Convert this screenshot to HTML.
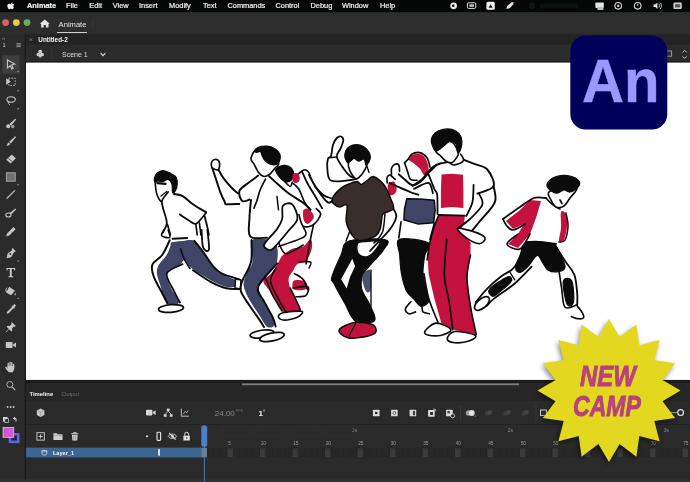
<!DOCTYPE html>
<html><head><meta charset="utf-8"><title>Animate</title>
<style>html,body{margin:0;padding:0;background:#2b2b2b;overflow:hidden}svg{display:block}</style></head>
<body><svg width="690" height="482" viewBox="0 0 690 482">
<g filter="url(#soft0)"><rect x="0" y="0" width="690" height="482" fill="#2b2b2b"/><rect x="0" y="0" width="690" height="12.3" fill="#050706"/><rect x="0" y="12.3" width="690" height="22" fill="#2d2d2d"/><rect x="25" y="34.3" width="665" height="10.5" fill="#232323"/><rect x="25" y="44.8" width="665" height="17.5" fill="#2b2b2b"/><rect x="25" y="61" width="665" height="1.8" fill="#1a1a1a"/><rect x="25.7" y="62.6" width="664.3" height="317.3" fill="#ffffff"/><rect x="0" y="34.3" width="25" height="448" fill="#2b2b2b"/><rect x="24.6" y="34.3" width="1.4" height="448" fill="#1c1c1c"/><rect x="26" y="380.2" width="664" height="102" fill="#2a2a2a"/><rect x="26" y="380.2" width="664" height="3" fill="#1b1b1b"/><rect x="26" y="383.2" width="664" height="17.5" fill="#262626"/><rect x="242" y="383.4" width="277" height="1.8" fill="#7d7d7d"/><rect x="26" y="424" width="664" height="1" fill="#222"/><rect x="26" y="447.6" width="177" height="9.8" fill="#3b6491"/><rect x="0" y="479.5" width="690" height="2.5" fill="#323232"/><text x="27" y="8.1" font-family="Liberation Sans, sans-serif" font-size="7.4" fill="#f2f2f2" font-weight="bold" text-anchor="start" stroke="#f2f2f2" stroke-width=".2">Animate</text><text x="66" y="8.1" font-family="Liberation Sans, sans-serif" font-size="7.4" fill="#f2f2f2" font-weight="normal" text-anchor="start" stroke="#f2f2f2" stroke-width=".2">File</text><text x="89.3" y="8.1" font-family="Liberation Sans, sans-serif" font-size="7.4" fill="#f2f2f2" font-weight="normal" text-anchor="start" stroke="#f2f2f2" stroke-width=".2">Edit</text><text x="112.7" y="8.1" font-family="Liberation Sans, sans-serif" font-size="7.4" fill="#f2f2f2" font-weight="normal" text-anchor="start" stroke="#f2f2f2" stroke-width=".2">View</text><text x="139" y="8.1" font-family="Liberation Sans, sans-serif" font-size="7.4" fill="#f2f2f2" font-weight="normal" text-anchor="start" stroke="#f2f2f2" stroke-width=".2">Insert</text><text x="169" y="8.1" font-family="Liberation Sans, sans-serif" font-size="7.4" fill="#f2f2f2" font-weight="normal" text-anchor="start" stroke="#f2f2f2" stroke-width=".2">Modify</text><text x="203" y="8.1" font-family="Liberation Sans, sans-serif" font-size="7.4" fill="#f2f2f2" font-weight="normal" text-anchor="start" stroke="#f2f2f2" stroke-width=".2">Text</text><text x="227.5" y="8.1" font-family="Liberation Sans, sans-serif" font-size="7.4" fill="#f2f2f2" font-weight="normal" text-anchor="start" stroke="#f2f2f2" stroke-width=".2">Commands</text><text x="275.5" y="8.1" font-family="Liberation Sans, sans-serif" font-size="7.4" fill="#f2f2f2" font-weight="normal" text-anchor="start" stroke="#f2f2f2" stroke-width=".2">Control</text><text x="310.5" y="8.1" font-family="Liberation Sans, sans-serif" font-size="7.4" fill="#f2f2f2" font-weight="normal" text-anchor="start" stroke="#f2f2f2" stroke-width=".2">Debug</text><text x="342" y="8.1" font-family="Liberation Sans, sans-serif" font-size="7.4" fill="#f2f2f2" font-weight="normal" text-anchor="start" stroke="#f2f2f2" stroke-width=".2">Window</text><text x="380" y="8.1" font-family="Liberation Sans, sans-serif" font-size="7.4" fill="#f2f2f2" font-weight="normal" text-anchor="start" stroke="#f2f2f2" stroke-width=".2">Help</text><path d="M12.6 2.6c-.9.1-1.5.8-1.5 1.5 .8.1 1.6-.7 1.5-1.5z M13.9 7.3c-.4.9-.9 1.9-1.7 1.9-.6 0-.8-.4-1.5-.4s-.9.4-1.5.4c-.8 0-1.9-1.8-1.9-3.200 0-1.500 1-2.200 1.900-2.200.7 0 1.100.4 1.600.4.500 0 .9-.4 1.700-.4.500 0 1.200.2 1.700.9-1.300.8-1.100 2.300-.3 2.600z" fill="#f2f2f2"/><circle cx="453.6" cy="5.8" r="3.4" fill="#e8e8e8"/><circle cx="453.2" cy="5.8" r="1.3" fill="#111"/><rect x="467.4" y="2.8" width="8.4" height="5.6" rx="1.2" fill="none" stroke="#dcdcdc" stroke-width="1"/><rect x="469.3" y="4.3" width="4.6" height="2.6" fill="#bbb"/><rect x="486.4" y="1.8" width="8.4" height="8" rx="1.6" fill="#f0f0f0"/><path d="M488.6 7.8l2-3.6 2 3.6z" fill="#111"/><path d="M506.2 9l1.200-3.200 3.800-3.400 2.400-.4-.4 2.400-3.400 3.800z" fill="#e0e0e0"/><rect x="529" y="2.600" width="6" height="6.600" rx="2" fill="#0e1612"/><rect x="540" y="3.600" width="38" height="4.600" fill="#0b120e"/><rect x="595.4" y="2.400" width="8.400" height="5.600" rx=".8" fill="#e6e6e6"/><rect x="597.4" y="7" width="6" height="3" fill="#bdbdbd"/><circle cx="618.2" cy="5.800" r="3.300" fill="none" stroke="#d8d8d8" stroke-width="1.100"/><circle cx="618.2" cy="5.800" r="1.200" fill="#d8d8d8"/><circle cx="637.7" cy="5.800" r="3.300" fill="none" stroke="#d8d8d8" stroke-width="1.100"/><path d="M637.7 3.800v2.400" stroke="#d8d8d8" stroke-width="1"/><path d="M653.6 4.600h1.600l2.200-2v6.400l-2.200-2h-1.600z" fill="#e6e6e6"/><path d="M658.8 3.800a3 3 0 0 1 0 4M660.2 2.600a4.600 4.600 0 0 1 0 6.400" stroke="#e0e0e0" stroke-width=".8" fill="none"/><rect x="673.4" y="2.600" width="8.400" height="6.400" rx="1.200" fill="#cfcfcf"/><rect x="675" y="4.200" width="5.200" height="3.200" fill="#555"/><circle cx="5.600" cy="22.600" r="3.400" fill="#d9606a"/><circle cx="16.300" cy="22.600" r="3.400" fill="#e3cf45"/><circle cx="27" cy="22.600" r="3.400" fill="#62b257"/><path d="M44.800 19.400l-5 4.400h1.300v3.800h2.600v-2.600h2.200v2.600h2.600v-3.800h1.300z" fill="#e4e4e4"/><text x="58.6" y="27.2" font-family="Liberation Sans, sans-serif" font-size="7.6" fill="#e6e6e6" font-weight="normal" text-anchor="start" >Animate</text><rect x="57" y="32" width="30" height="1" fill="#cfcfcf"/><rect x="92.500" y="18" width=".7" height="11" fill="#3c3c3c"/><path d="M29.600 38.300l2.600 2.600M32.200 38.300l-2.600 2.600" stroke="#8a8a8a" stroke-width=".7"/><text x="38.3" y="41.9" font-family="Liberation Sans, sans-serif" font-size="6.4" fill="#f0f0f0" font-weight="bold" text-anchor="start" >Untitled-2</text><g fill="#d0d0d0"><circle cx="40.200" cy="51.600" r="1.900"/><circle cx="38.400" cy="54.600" r="1.900"/><circle cx="42" cy="54.600" r="1.900"/><path d="M39.600 54h1.200l.6 3.400h-2.400z"/></g><rect x="51.400" y="48" width=".7" height="11" fill="#3a3a3a"/><text x="62" y="56.9" font-family="Liberation Sans, sans-serif" font-size="7" fill="#dedede" font-weight="normal" text-anchor="start" >Scene 1</text><path d="M100.600 53.200l2.400 2.400 2.400-2.400" stroke="#dedede" stroke-width="1.200" fill="none"/><rect x="666.200" y="51" width="5.400" height="5.200" fill="none" stroke="#9a9a9a" stroke-width="1"/><path d="M682.600 52.400l2-2 2 2M682.600 56.400l2 2 2-2" stroke="#c8c8c8" stroke-width="1" fill="none"/><text x="2" y="39.5" font-family="Liberation Sans, sans-serif" font-size="5" fill="#9a9a9a" font-weight="normal" text-anchor="start" >‹‹</text><text x="2.5" y="47" font-family="Liberation Sans, sans-serif" font-size="5.5" fill="#cfcfcf" font-weight="normal" text-anchor="start" >1</text><path d="M16.400 43.600h4.400M16.400 45.100h4.400M16.400 46.600h4.400" stroke="#a8a8a8" stroke-width=".8"/><rect x="2.300" y="55.300" width="17.400" height="18.400" fill="#3e3e3e"/><g transform="translate(10.8,64.5)" fill="#c6c6c6" stroke="none"><path d="M-3.400 -4.600l7.400 4.200-3.200 1 1.600 3.200-1.400.7-1.600-3.200-2.800 2.100z" fill="none" stroke="#c6c6c6" stroke-width="1.100"/></g><g transform="translate(10.8,82)" fill="#c6c6c6" stroke="none"><path d="M-4.600 -3.800l4.600 3.400-4.600 3.400z"/><rect x="-2" y="-3.800" width="6.400" height="7.200" fill="none" stroke="#c6c6c6" stroke-width=".9" stroke-dasharray="1.600 1.200"/></g><g transform="translate(10.8,100.5)" fill="#c6c6c6" stroke="none"><ellipse cx=".3" cy="-1" rx="4.200" ry="2.800" fill="none" stroke="#c6c6c6" stroke-width="1.100"/><path d="M-2.200 1.200c-.8 1.400 0 2.600 1.200 3" fill="none" stroke="#c6c6c6" stroke-width="1"/></g><g transform="translate(10.8,123.5)" fill="#c6c6c6" stroke="none"><path d="M4.400 -4.800l.9.900-5 6.100-1.700-1.700z"/><circle cx="-2.600" cy="2.800" r="2"/><circle cx="2" cy="3" r="1.700" fill="#9a9a9a"/></g><g transform="translate(10.8,141)" fill="#c6c6c6" stroke="none"><path d="M4.400 -4.800l.9.900-5.200 6.300-1.700-1.700z"/><path d="M-2.200 1.400l1.600 1.600c-1 1.700-2.600 1.800-4 1.600 1.300-.7 1-2.300 2.400-3.200z"/></g><g transform="translate(10.8,159)" fill="#c6c6c6" stroke="none"><path d="M1 -4.400l4 3.600-5 5.200-4.600-3.600z"/><path d="M-2.400 -.6l4 3.400" stroke="#2b2b2b" stroke-width=".8"/></g><g transform="translate(10.8,177)" fill="#c6c6c6" stroke="none"><rect x="-4.400" y="-4.200" width="8.800" height="8.400" fill="#707070" stroke="#a6a6a6" stroke-width="1"/></g><g transform="translate(10.8,194.5)" fill="#c6c6c6" stroke="none"><path d="M-4.200 4.200l8.400-8.400" stroke="#c6c6c6" stroke-width="1.200"/></g><g transform="translate(10.8,213)" fill="#c6c6c6" stroke="none"><path d="M4.600 -4.600l.9.900-5 5-1.700-1.300z"/><ellipse cx="-2.400" cy="2" rx="2.600" ry="2" fill="none" stroke="#c6c6c6" stroke-width="1.100"/></g><g transform="translate(10.8,232)" fill="#c6c6c6" stroke="none"><path d="M2.600 -5l2.200 2.200-6.400 6.400-3 .9.900-3z"/></g><g transform="translate(10.8,253)" fill="#c6c6c6" stroke="none"><path d="M1.600 -5.200l3.400 3.400-2 1.200-2.600 4.800-4.600 1 1-4.600 4.200-3z"/><circle cx="-.6" cy="1" r=".9" fill="#2b2b2b"/></g><g transform="translate(10.8,272.5)" fill="#c6c6c6" stroke="none"><path d="M-4.400 -4.600h8.800v2.400h-1l-.4-1.200h-2v7l1.400.4v.7h-4.800v-.7l1.400-.4v-7h-2l-.4 1.200h-1z"/></g><g transform="translate(10.8,291)" fill="#c6c6c6" stroke="none"><path d="M-1.600 -4.200l5.800 4-4 4.400-4.800-2.800z"/><path d="M-3.600 -3.200c-1.600.8-1.600 3-.6 4.600" stroke="#c6c6c6" stroke-width="1" fill="none"/><path d="M4.400 1.800c.8 1.200.8 2.200 0 2.800-.8-.6-.8-1.600 0-2.800z"/></g><g transform="translate(10.8,309)" fill="#c6c6c6" stroke="none"><path d="M3.400 -5.200l1.800 1.800-1.600 1.800.5.500-.9.900-.5-.5-4.900 4.900-2 .6.600-2 4.900-4.900-.5-.5.900-.9.500.5z"/></g><g transform="translate(10.8,327)" fill="#c6c6c6" stroke="none"><path d="M1 -5l4 4-1 .8-.8-.3-2 2 .3 2-1 1-2.200-2.200-2.700 2.900-.5-.5 2.900-2.700-2.200-2.200 1-1 2 .3 2-2-.3-.8z"/></g><g transform="translate(10.8,345)" fill="#c6c6c6" stroke="none"><rect x="-5" y="-3" width="6.800" height="6" rx=".8"/><path d="M2.200 -.6l3-2v5.200l-3-2z"/></g><g transform="translate(10.8,367.5)" fill="#c6c6c6" stroke="none"><path d="M-2.600 -1v-3M-.8 -1.400v-3.600M1 -1.400v-3.400M2.800 -.6v-2.600" stroke="#c6c6c6" stroke-width="1.300" stroke-linecap="round" fill="none"/><path d="M-3.300 -1.400h6.800v2.600l-1.400 3.600h-4l-2.600-2.800-1.200-2.400 1-.5 1.400 1.300z"/></g><g transform="translate(10.8,385.7)" fill="#c6c6c6" stroke="none"><circle cx="-1" cy="-1.200" r="3" fill="none" stroke="#b0b0b0" stroke-width="1"/><path d="M1.400 1.200l3 3.200" stroke="#b0b0b0" stroke-width="1.300"/></g><path d="M17 72.0h1.600v-1.600z" fill="#bdbdbd"/><path d="M17 91.19999999999999h1.600v-1.600z" fill="#bdbdbd"/><path d="M17 109.19999999999999h1.600v-1.600z" fill="#bdbdbd"/><path d="M17 185.2h1.600v-1.600z" fill="#bdbdbd"/><path d="M17 261.6h1.600v-1.600z" fill="#bdbdbd"/><path d="M17 299.1h1.600v-1.600z" fill="#bdbdbd"/><circle cx="7.600" cy="407" r=".9" fill="#cfcfcf"/><circle cx="10.600" cy="407" r=".9" fill="#cfcfcf"/><circle cx="13.600" cy="407" r=".9" fill="#cfcfcf"/><rect x="3" y="417" width="4.600" height="4.600" fill="#d8d8d8"/><rect x="4.800" y="418.800" width="3.600" height="3.600" fill="#2b2b2b" stroke="#d8d8d8" stroke-width=".7"/><path d="M13.400 418.400h2.600v3.200M13.400 418.400l1.400-1.300M13.400 418.400l1.400 1.300" stroke="#d8d8d8" stroke-width="1" fill="none"/><rect x="8.700" y="433" width="10.800" height="10.200" fill="#5b66da"/><rect x="11.400" y="435.600" width="5.400" height="5" fill="#1f2340"/><rect x="3" y="427.400" width="10.800" height="10" fill="#d556d3" stroke="#e9e9e9" stroke-width=".6"/><text x="29.4" y="396.3" font-family="Liberation Sans, sans-serif" font-size="5.9" fill="#f0f0f0" font-weight="bold" text-anchor="start" >Timeline</text><text x="61.6" y="396.3" font-family="Liberation Sans, sans-serif" font-size="5.9" fill="#6a6a6a" font-weight="normal" text-anchor="start" >Output</text><path d="M40.600 408.600l3.800 1.800v4.600l-3.800 2-3.800-2v-4.600z" fill="#c9c9c9"/><path d="M36.800 410.400l3.800 1.800 3.800-1.800M40.600 412.200v4.800" stroke="#8b8b8b" stroke-width=".6" fill="none"/><g transform="translate(150.800,412.600)" fill="#d6d6d6"><rect x="-4.800" y="-2.800" width="6.400" height="5.600" rx=".8"/><path d="M2 -.6l2.800-1.800v4.800l-2.800-1.800z"/></g><g transform="translate(168.200,412.600)" fill="#d6d6d6"><rect x="-1.400" y="-4" width="2.800" height="2.600"/><rect x="-4.400" y="1.600" width="2.800" height="2.600"/><rect x="1.600" y="1.600" width="2.800" height="2.600"/><path d="M0 -1.400l-3 3M0 -1.400l3 3" stroke="#d6d6d6" stroke-width=".8"/></g><g transform="translate(184.900,412.600)" fill="none" stroke="#cfcfcf" stroke-width=".9"><path d="M-3.600 -4v7.600h7.600"/><path d="M-1.600 1.600l2-3 1.400 1.600 1.600-2.400" stroke-width=".7"/></g><text x="214.8" y="416" font-family="Liberation Sans, sans-serif" font-size="8" fill="#8a8a8a" font-weight="normal" text-anchor="start" >24.00</text><text x="236.2" y="411.6" font-family="Liberation Sans, sans-serif" font-size="3.4" fill="#777" font-weight="normal" text-anchor="start" >FPS</text><text x="258.5" y="416.2" font-family="Liberation Sans, sans-serif" font-size="8" fill="#f4f4f4" font-weight="bold" text-anchor="start" >1</text><path d="M264 409.400v2.400" stroke="#ddd" stroke-width=".8"/><rect x="372.9" y="409.7" width="6.600" height="6.600" rx=".6" fill="#dcdcdc"/><circle cx="376.200" cy="413" r="1.300" fill="#222"/><rect x="391.09999999999997" y="409.7" width="6.600" height="6.600" rx=".6" fill="#dcdcdc"/><circle cx="394.400" cy="413" r="1.500" fill="none" stroke="#333" stroke-width=".7"/><rect x="409.59999999999997" y="409.7" width="6.600" height="6.600" rx=".6" fill="#dcdcdc"/><rect x="412.900" y="410.800" width="2.200" height="4.400" fill="#444"/><rect x="428.09999999999997" y="410.09999999999997" width="6.600" height="6.600" rx=".6" fill="#dcdcdc"/><rect x="430" y="412" width="3" height="3" fill="#333"/><path d="M433.400 409.200l2 .2-.2 2" stroke="#dcdcdc" stroke-width=".8" fill="none"/><rect x="446.09999999999997" y="409.7" width="6.600" height="6.600" rx=".6" fill="#dcdcdc"/><rect x="447.400" y="411" width="2.400" height="2.400" fill="#444"/><circle cx="452.600" cy="415.800" r="2" fill="#2a2a2a" stroke="#dcdcdc" stroke-width=".8"/><rect x="460.200" y="405" width=".8" height="17" fill="#3a3a3a"/><circle cx="468.600" cy="413" r="2.800" fill="#9c9c9c"/><circle cx="471.800" cy="413" r="2.900" fill="#e2e2e2"/><path d="M474.600 416.600h1.300v-1.300z" fill="#bbb"/><circle cx="487.0" cy="413.6" r="2.400" fill="#3d3d3d"/><circle cx="489.79999999999995" cy="412.4" r="2.400" fill="#444"/><circle cx="505.6" cy="413.6" r="2.400" fill="#3d3d3d"/><circle cx="508.4" cy="412.4" r="2.400" fill="#444"/><circle cx="523.6" cy="413.6" r="2.400" fill="#3d3d3d"/><circle cx="526.4" cy="412.4" r="2.400" fill="#444"/><rect x="535.600" y="405" width=".8" height="17" fill="#3a3a3a"/><rect x="540.500" y="410" width="6" height="5.400" fill="none" stroke="#cfcfcf" stroke-width="1"/><path d="M662 412.600h15" stroke="#9a9a9a" stroke-width="1"/><circle cx="680.600" cy="412.600" r="2.900" fill="#2a2a2a" stroke="#e0e0e0" stroke-width="1.200"/><rect x="36.900" y="432.700" width="7.400" height="7.400" fill="none" stroke="#d6d6d6" stroke-width=".9"/><path d="M38.600 436.400h4M40.600 434.400v4" stroke="#d6d6d6" stroke-width=".9"/><path d="M53.400 433.200h3.200l.9 1.100h5v5.800h-9.100z" fill="#cfcfcf"/><path d="M53.400 435.600h9.100" stroke="#777" stroke-width=".5"/><path d="M71.200 433.700h7.200M73.400 433.700v-1.100h2.800v1.100" stroke="#cfcfcf" stroke-width=".9" fill="none"/><path d="M71.900 434.800h5.800l-.5 5.600h-4.800z" fill="#cfcfcf"/><path d="M73.800 435.600v4M75.800 435.600v4" stroke="#666" stroke-width=".5"/><circle cx="147" cy="436.300" r="1" fill="#eee"/><rect x="157" y="432.200" width="3.600" height="8.200" rx=".8" fill="none" stroke="#e6e6e6" stroke-width="1.100"/><g transform="translate(172.400,436.300)" stroke="#d8d8d8" fill="none" stroke-width=".9"><path d="M-4.200 0c2-3 6.400-3 8.400 0-2 3-6.400 3-8.400 0z"/><circle r="1.100" fill="#d8d8d8"/><path d="M-3.400 -3.400l6.800 6.800" stroke-width="1.100"/></g><g transform="translate(186.600,436.300)"><rect x="-3.200" y="-.6" width="6.400" height="4.800" fill="#e2e2e2"/><path d="M-1.900 -.6v-1.500a1.900 1.900 0 0 1 3.800 0v1.500" stroke="#e2e2e2" fill="none" stroke-width="1"/><circle cy="1.700" r=".8" fill="#333"/></g><path d="M42 450.400h4.800v3c0 1-.9 1.700-2.400 1.700s-2.400-.7-2.400-1.700z" fill="none" stroke="#d9e2ee" stroke-width=".8"/><path d="M42 451.800h4.800" stroke="#d9e2ee" stroke-width=".6"/><text x="52.9" y="454.6" font-family="Liberation Sans, sans-serif" font-size="5.6" fill="#f2f5fa" font-weight="bold" text-anchor="start" >Layer_1</text><rect x="158" y="449.200" width="2" height="6.400" fill="#cfe0f4"/><rect x="203" y="447.600" width="487" height="9.800" fill="#272727"/><rect x="207.0" y="448.400" width=".5" height="8.600" fill="#222"/><rect x="213.5" y="448.400" width=".5" height="8.600" fill="#222"/><rect x="220.0" y="448.400" width=".5" height="8.600" fill="#222"/><rect x="226.5" y="448.400" width=".5" height="8.600" fill="#222"/><rect x="227.5" y="448.400" width="5.400" height="8.600" fill="#3a3a3a"/><rect x="239.5" y="448.400" width=".5" height="8.600" fill="#222"/><rect x="246.0" y="448.400" width=".5" height="8.600" fill="#222"/><rect x="252.5" y="448.400" width=".5" height="8.600" fill="#222"/><rect x="259.0" y="448.400" width=".5" height="8.600" fill="#222"/><rect x="260.0" y="448.400" width="5.400" height="8.600" fill="#3a3a3a"/><rect x="272.0" y="448.400" width=".5" height="8.600" fill="#222"/><rect x="278.5" y="448.400" width=".5" height="8.600" fill="#222"/><rect x="285.0" y="448.400" width=".5" height="8.600" fill="#222"/><rect x="291.5" y="448.400" width=".5" height="8.600" fill="#222"/><rect x="292.5" y="448.400" width="5.400" height="8.600" fill="#3a3a3a"/><rect x="304.5" y="448.400" width=".5" height="8.600" fill="#222"/><rect x="311.0" y="448.400" width=".5" height="8.600" fill="#222"/><rect x="317.5" y="448.400" width=".5" height="8.600" fill="#222"/><rect x="324.0" y="448.400" width=".5" height="8.600" fill="#222"/><rect x="325.0" y="448.400" width="5.400" height="8.600" fill="#3a3a3a"/><rect x="337.0" y="448.400" width=".5" height="8.600" fill="#222"/><rect x="343.5" y="448.400" width=".5" height="8.600" fill="#222"/><rect x="350.0" y="448.400" width=".5" height="8.600" fill="#222"/><rect x="356.5" y="448.400" width=".5" height="8.600" fill="#222"/><rect x="357.5" y="448.400" width="5.400" height="8.600" fill="#3a3a3a"/><rect x="369.5" y="448.400" width=".5" height="8.600" fill="#222"/><rect x="376.0" y="448.400" width=".5" height="8.600" fill="#222"/><rect x="382.5" y="448.400" width=".5" height="8.600" fill="#222"/><rect x="389.0" y="448.400" width=".5" height="8.600" fill="#222"/><rect x="390.0" y="448.400" width="5.400" height="8.600" fill="#3a3a3a"/><rect x="402.0" y="448.400" width=".5" height="8.600" fill="#222"/><rect x="408.5" y="448.400" width=".5" height="8.600" fill="#222"/><rect x="415.0" y="448.400" width=".5" height="8.600" fill="#222"/><rect x="421.5" y="448.400" width=".5" height="8.600" fill="#222"/><rect x="422.5" y="448.400" width="5.400" height="8.600" fill="#3a3a3a"/><rect x="434.5" y="448.400" width=".5" height="8.600" fill="#222"/><rect x="441.0" y="448.400" width=".5" height="8.600" fill="#222"/><rect x="447.5" y="448.400" width=".5" height="8.600" fill="#222"/><rect x="454.0" y="448.400" width=".5" height="8.600" fill="#222"/><rect x="455.0" y="448.400" width="5.400" height="8.600" fill="#3a3a3a"/><rect x="467.0" y="448.400" width=".5" height="8.600" fill="#222"/><rect x="473.5" y="448.400" width=".5" height="8.600" fill="#222"/><rect x="480.0" y="448.400" width=".5" height="8.600" fill="#222"/><rect x="486.5" y="448.400" width=".5" height="8.600" fill="#222"/><rect x="487.5" y="448.400" width="5.400" height="8.600" fill="#3a3a3a"/><rect x="499.5" y="448.400" width=".5" height="8.600" fill="#222"/><rect x="506.0" y="448.400" width=".5" height="8.600" fill="#222"/><rect x="512.5" y="448.400" width=".5" height="8.600" fill="#222"/><rect x="519.0" y="448.400" width=".5" height="8.600" fill="#222"/><rect x="520.0" y="448.400" width="5.400" height="8.600" fill="#3a3a3a"/><rect x="532.0" y="448.400" width=".5" height="8.600" fill="#222"/><rect x="538.5" y="448.400" width=".5" height="8.600" fill="#222"/><rect x="545.0" y="448.400" width=".5" height="8.600" fill="#222"/><rect x="551.5" y="448.400" width=".5" height="8.600" fill="#222"/><rect x="552.5" y="448.400" width="5.400" height="8.600" fill="#3a3a3a"/><rect x="564.5" y="448.400" width=".5" height="8.600" fill="#222"/><rect x="571.0" y="448.400" width=".5" height="8.600" fill="#222"/><rect x="577.5" y="448.400" width=".5" height="8.600" fill="#222"/><rect x="584.0" y="448.400" width=".5" height="8.600" fill="#222"/><rect x="585.0" y="448.400" width="5.400" height="8.600" fill="#3a3a3a"/><rect x="597.0" y="448.400" width=".5" height="8.600" fill="#222"/><rect x="603.5" y="448.400" width=".5" height="8.600" fill="#222"/><rect x="610.0" y="448.400" width=".5" height="8.600" fill="#222"/><rect x="616.5" y="448.400" width=".5" height="8.600" fill="#222"/><rect x="617.5" y="448.400" width="5.400" height="8.600" fill="#3a3a3a"/><rect x="629.5" y="448.400" width=".5" height="8.600" fill="#222"/><rect x="636.0" y="448.400" width=".5" height="8.600" fill="#222"/><rect x="642.5" y="448.400" width=".5" height="8.600" fill="#222"/><rect x="649.0" y="448.400" width=".5" height="8.600" fill="#222"/><rect x="650.0" y="448.400" width="5.400" height="8.600" fill="#3a3a3a"/><rect x="662.0" y="448.400" width=".5" height="8.600" fill="#222"/><rect x="668.5" y="448.400" width=".5" height="8.600" fill="#222"/><rect x="675.0" y="448.400" width=".5" height="8.600" fill="#222"/><rect x="681.5" y="448.400" width=".5" height="8.600" fill="#222"/><rect x="682.5" y="448.400" width="5.400" height="8.600" fill="#3a3a3a"/><rect x="694.5" y="448.400" width=".5" height="8.600" fill="#222"/><text x="228.2" y="444.6" font-family="Liberation Sans, sans-serif" font-size="4.8" fill="#9a9a9a" font-weight="normal" text-anchor="start" >5</text><text x="260.7" y="444.6" font-family="Liberation Sans, sans-serif" font-size="4.8" fill="#9a9a9a" font-weight="normal" text-anchor="start" >10</text><text x="293.2" y="444.6" font-family="Liberation Sans, sans-serif" font-size="4.8" fill="#9a9a9a" font-weight="normal" text-anchor="start" >15</text><text x="325.7" y="444.6" font-family="Liberation Sans, sans-serif" font-size="4.8" fill="#9a9a9a" font-weight="normal" text-anchor="start" >20</text><text x="358.2" y="444.6" font-family="Liberation Sans, sans-serif" font-size="4.8" fill="#9a9a9a" font-weight="normal" text-anchor="start" >25</text><text x="390.7" y="444.6" font-family="Liberation Sans, sans-serif" font-size="4.8" fill="#9a9a9a" font-weight="normal" text-anchor="start" >30</text><text x="423.2" y="444.6" font-family="Liberation Sans, sans-serif" font-size="4.8" fill="#9a9a9a" font-weight="normal" text-anchor="start" >35</text><text x="455.7" y="444.6" font-family="Liberation Sans, sans-serif" font-size="4.8" fill="#9a9a9a" font-weight="normal" text-anchor="start" >40</text><text x="488.2" y="444.6" font-family="Liberation Sans, sans-serif" font-size="4.8" fill="#9a9a9a" font-weight="normal" text-anchor="start" >45</text><text x="520.7" y="444.6" font-family="Liberation Sans, sans-serif" font-size="4.8" fill="#9a9a9a" font-weight="normal" text-anchor="start" >50</text><text x="553.2" y="444.6" font-family="Liberation Sans, sans-serif" font-size="4.8" fill="#9a9a9a" font-weight="normal" text-anchor="start" >55</text><text x="585.7" y="444.6" font-family="Liberation Sans, sans-serif" font-size="4.8" fill="#9a9a9a" font-weight="normal" text-anchor="start" >60</text><text x="618.2" y="444.6" font-family="Liberation Sans, sans-serif" font-size="4.8" fill="#9a9a9a" font-weight="normal" text-anchor="start" >65</text><text x="650.7" y="444.6" font-family="Liberation Sans, sans-serif" font-size="4.8" fill="#9a9a9a" font-weight="normal" text-anchor="start" >70</text><text x="683.2" y="444.6" font-family="Liberation Sans, sans-serif" font-size="4.8" fill="#9a9a9a" font-weight="normal" text-anchor="start" >75</text><text x="351.7" y="431.6" font-family="Liberation Sans, sans-serif" font-size="5" fill="#8a8a8a" font-weight="normal" text-anchor="start" >1s</text><text x="507.7" y="431.6" font-family="Liberation Sans, sans-serif" font-size="5" fill="#8a8a8a" font-weight="normal" text-anchor="start" >2s</text><text x="663.7" y="431.6" font-family="Liberation Sans, sans-serif" font-size="5" fill="#8a8a8a" font-weight="normal" text-anchor="start" >3s</text><rect x="222" y="426.600" width="30" height="9" fill="none" stroke="#333" stroke-width=".6"/><rect x="256" y="426.600" width="30" height="9" fill="none" stroke="#333" stroke-width=".6"/><rect x="290" y="426.600" width="30" height="9" fill="none" stroke="#333" stroke-width=".6"/><rect x="324" y="426.600" width="30" height="9" fill="none" stroke="#333" stroke-width=".6"/><rect x="203.900" y="425" width="1" height="57" fill="#4a79b8"/><rect x="201.200" y="425.400" width="6" height="21.400" rx="2" fill="#4c7fc6"/><rect x="201.400" y="447.800" width="5.600" height="9.400" fill="#6d7f96"/></g>
<g filter="url(#soft)"><g stroke-linejoin="round" stroke-linecap="round"><path d="M171.9 242.3 C173.9 241.5 179.2 241.2 182.7 240.9 C186.2 240.6 190.3 239.6 192.9 240.2 C195.5 240.8 196.3 242.6 198.0 244.5 C199.7 246.4 201.0 248.8 203.1 251.8 C205.2 254.8 207.7 259.3 210.3 262.7 C213.0 266.1 215.4 269.5 219.0 272.1 C222.6 274.8 229.1 277.2 232.1 278.6 C235.1 280.1 236.5 279.6 237.2 280.8 C237.9 282.0 238.2 284.9 236.4 285.9 C234.6 286.9 230.2 287.6 226.3 286.9 C222.4 286.2 217.5 283.8 213.2 281.6 C208.8 279.5 203.8 276.3 200.2 274.0 C196.6 271.7 194.1 270.2 191.4 268.0 C188.7 265.8 186.1 261.0 184.2 260.5 C182.3 260.0 182.5 262.9 179.8 264.8 C177.1 266.7 170.4 269.9 168.2 272.1 C166.0 274.3 166.1 274.8 166.8 277.9 C167.5 281.0 170.6 286.9 172.6 291.0 C174.6 295.1 179.3 300.2 179.0 302.5 C178.7 304.8 172.9 304.9 170.5 304.5 C168.1 304.1 166.3 303.0 164.6 299.8 C162.9 296.6 161.6 289.6 160.3 285.2 C159.0 280.8 157.2 276.9 156.9 273.5 C156.7 270.1 157.2 267.9 158.8 264.8 C160.5 261.7 164.9 257.8 166.8 254.7 C168.7 251.6 169.6 248.1 170.4 246.0 C171.2 243.9 169.9 243.2 171.9 242.3 Z" fill="#3f4567" stroke="none" stroke-width="0.00"/><path d="M169.7 240.2 C168.5 242.6 165.3 250.6 162.4 254.7 C159.5 258.8 153.8 261.2 152.3 264.8 C150.9 268.4 152.2 272.0 153.7 276.4 C155.1 280.8 158.7 286.5 161.0 291.0 C163.3 295.5 166.4 301.4 167.5 303.5" fill="none" stroke="#0b0b0b" stroke-width="1.95"/><path d="M182.7 264.1 C180.0 265.7 168.2 269.0 166.8 273.5 C165.4 278.0 171.8 286.2 174.0 291.0 C176.2 295.8 179.0 300.6 180.0 302.5" fill="none" stroke="#0b0b0b" stroke-width="1.80"/><path d="M180.6 248.9 C181.2 250.6 182.6 255.7 184.2 259.0 C185.8 262.3 189.0 266.9 190.0 268.5" fill="none" stroke="#0b0b0b" stroke-width="1.65"/><path d="M194.3 240.9 C195.8 242.7 199.9 247.6 203.1 251.8 C206.2 256.0 210.1 262.7 213.2 266.3 C216.3 269.9 217.6 271.3 221.9 273.5 C226.2 275.7 236.4 278.3 239.3 279.3" fill="none" stroke="#0b0b0b" stroke-width="1.95"/><path d="M192.9 270.2 C195.8 272.1 204.7 278.6 210.3 281.6 C215.9 284.6 221.5 287.1 226.3 288.3 C231.1 289.5 237.1 288.9 239.3 289.0" fill="none" stroke="#0b0b0b" stroke-width="1.95"/><path d="M172.6 238.7 L187.1 238.0" fill="none" stroke="#0b0b0b" stroke-width="1.95"/><path d="M235.5 279 L241 280 L240.5 289 L235 288 Z" fill="#fff" stroke="#0b0b0b" stroke-width="1.50"/><ellipse cx="171" cy="308.5" rx="12.5" ry="3.8" fill="#fff" stroke="#0b0b0b" stroke-width="1.72" transform="rotate(-4 171 308.5)"/><path d="M201.6 230.0 C201.8 232.9 201.9 244.1 203.1 247.4 C204.3 250.7 208.2 252.5 208.9 249.6 C209.6 246.7 207.7 233.3 207.4 230.0" fill="none" stroke="#0b0b0b" stroke-width="1.80"/><path d="M163.9 230.0 C163.5 231.0 160.7 234.6 161.7 235.8 C162.7 237.0 168.6 238.3 169.7 237.3 C170.8 236.3 168.4 231.2 168.2 230.0" fill="none" stroke="#0b0b0b" stroke-width="1.65"/><path d="M154.4 178.1 C154.8 176.5 155.9 174.3 157.3 173.0 C158.8 171.7 160.8 170.4 163.1 170.5 C165.4 170.6 168.9 172.6 171.1 173.7 C173.3 174.8 175.2 175.6 176.2 177.3 C177.2 179.0 177.3 181.7 177.2 183.9 C177.1 186.1 176.3 189.0 175.5 190.4 C174.7 191.8 173.2 193.7 172.6 192.6 C172.0 191.5 172.6 186.1 171.9 183.9 C171.2 181.7 169.8 179.9 168.2 179.5 C166.6 179.1 164.1 181.4 162.4 181.7 C160.7 181.9 159.3 180.9 158.1 181.0 C156.9 181.1 155.8 182.9 155.2 182.4 C154.6 181.9 154.1 179.7 154.4 178.1 Z" fill="#0b0b0b" stroke="#0b0b0b" stroke-width="1.20"/><path d="M155.2 182.4 C155.4 184.2 155.6 190.2 156.6 193.3 C157.6 196.5 159.9 200.5 161.0 201.3 C162.1 202.2 161.9 200.0 163.1 198.4 C164.3 196.8 167.3 193.0 168.2 191.9" fill="none" stroke="#0b0b0b" stroke-width="1.65"/><path d="M161.0 196.0 L166.8 191.5" fill="none" stroke="#0b0b0b" stroke-width="1.35"/><path d="M157.5 183.2 L165.5 183.8" fill="none" stroke="#0b0b0b" stroke-width="2.25"/><path d="M161.7 201.3 C161.9 202.5 162.2 204.9 163.1 208.5 C163.9 212.1 166.9 218.9 166.8 223.0 C166.7 227.1 163.1 231.5 162.4 233.2" fill="none" stroke="#0b0b0b" stroke-width="1.80"/><path d="M167.5 224.5 L170.4 234.7" fill="none" stroke="#0b0b0b" stroke-width="1.65"/><path d="M174.0 194.0 C175.4 194.4 179.5 194.5 182.7 196.2 C185.8 197.9 189.0 201.5 192.9 204.2 C196.8 206.9 203.8 210.9 206.0 212.2" fill="none" stroke="#0b0b0b" stroke-width="1.95"/><path d="M179.8 214.3 C181.2 215.3 185.8 218.6 188.5 220.2 C191.2 221.8 193.4 224.4 195.8 223.8 C198.2 223.2 201.4 218.3 203.1 216.5 C204.8 214.7 205.5 213.5 206.0 212.9" fill="none" stroke="#0b0b0b" stroke-width="1.80"/><path d="M195.8 223.8 L197.2 234.8" fill="none" stroke="#0b0b0b" stroke-width="1.65"/><path d="M199.4 223.0 L200.9 234.8" fill="none" stroke="#0b0b0b" stroke-width="1.65"/><path d="M204.5 215.8 C205.0 217.7 206.7 224.2 207.4 227.4 C208.1 230.6 208.7 233.6 208.9 234.8" fill="none" stroke="#0b0b0b" stroke-width="1.80"/><path d="M278.5 262.0 C280.4 258.9 280.6 257.2 283.0 255.0 C285.4 252.8 289.7 250.0 293.1 248.6 C296.5 247.2 300.3 248.0 303.2 246.4 C306.1 244.8 309.1 238.9 310.5 239.2 C311.9 239.4 312.6 244.3 311.9 247.9 C311.2 251.5 308.5 258.3 306.1 261.0 C303.7 263.7 299.6 262.4 297.4 264.0 C295.2 265.6 294.6 268.4 293.1 270.7 C291.7 273.0 289.2 275.1 288.7 278.0 C288.2 280.9 289.0 284.5 290.2 288.1 C291.4 291.7 294.3 296.1 296.0 299.7 C297.7 303.3 302.0 307.7 300.3 309.9 C298.6 312.1 289.4 313.5 285.8 312.8 C282.2 312.1 281.2 309.1 278.5 305.5 C275.8 301.9 272.3 295.1 269.8 291.0 C267.3 286.9 263.1 283.8 263.3 280.9 C263.6 278.0 268.8 276.8 271.3 273.6 C273.8 270.5 276.6 265.1 278.5 262.0 Z" fill="#c2123d" stroke="none" stroke-width="0.00"/><path d="M276.0 268.0 C275.1 270.2 270.0 275.7 270.5 281.0 C271.0 286.3 276.4 294.8 279.0 300.0 C281.6 305.2 284.8 310.0 286.0 312.0" fill="none" stroke="#0b0b0b" stroke-width="1.65"/><path d="M266.0 279.0 C267.0 281.5 269.3 288.7 272.0 294.0 C274.7 299.3 280.3 308.2 282.0 311.0" fill="none" stroke="#0b0b0b" stroke-width="1.65"/><path d="M300.3 309.9 C299.6 308.2 297.7 303.3 296.0 299.7 C294.3 296.1 291.2 290.0 290.2 288.1" fill="none" stroke="#0b0b0b" stroke-width="1.50"/><path d="M293.0 281.5 C293.8 279.9 296.8 279.9 299.0 280.0 C301.2 280.1 304.8 280.5 306.0 282.0 C307.2 283.5 308.5 287.7 306.5 289.0 C304.5 290.3 296.2 290.9 294.0 289.6 C291.8 288.4 292.2 283.1 293.0 281.5 Z" fill="#c2123d" stroke="none" stroke-width="0.00"/><path d="M293.0 288.0 C295.4 287.8 305.4 285.5 307.6 286.7 C309.8 287.9 307.9 293.7 306.0 295.4 C304.1 297.1 297.7 296.6 296.0 296.8" fill="none" stroke="#0b0b0b" stroke-width="1.65"/><path d="M294.5 273.6 C295.9 274.6 301.0 276.7 303.2 279.4 C305.4 282.1 306.9 287.9 307.6 289.6" fill="none" stroke="#0b0b0b" stroke-width="1.65"/><path d="M298.9 262.0 C300.8 262.0 308.8 261.0 310.5 262.0 C312.2 263.0 309.2 267.0 309.0 268.0" fill="none" stroke="#0b0b0b" stroke-width="1.50"/><path d="M278.5 317.2 C278.3 316.0 279.0 313.8 282.9 312.8 C286.8 311.8 299.4 310.6 301.8 311.3 C304.2 312.0 300.3 315.7 297.4 317.2 C294.5 318.7 287.4 320.1 284.3 320.1 C281.2 320.1 278.7 318.4 278.5 317.2 Z" fill="#fff" stroke="#0b0b0b" stroke-width="1.65"/><path d="M303.2 210.9 C303.8 209.0 305.9 208.1 307.6 208.7 C309.3 209.3 312.5 212.7 313.4 214.5 C314.2 216.3 313.7 218.0 312.7 219.6 C311.7 221.2 309.1 223.8 307.6 223.9 C306.1 224.0 304.6 222.5 303.9 220.3 C303.2 218.1 302.6 212.8 303.2 210.9 Z" fill="#c2123d" stroke="none" stroke-width="0.00"/><path d="M298.9 214.5 C299.6 216.4 300.8 224.4 303.2 226.1 C305.6 227.8 310.5 226.6 313.4 224.7 C316.3 222.8 320.1 217.2 320.6 214.5 C321.1 211.8 317.0 209.7 316.3 208.7" fill="none" stroke="#0b0b0b" stroke-width="1.65"/><path d="M303.2 226.9 C303.4 228.5 308.8 233.1 304.7 236.3 C300.6 239.6 282.9 244.7 278.5 246.4" fill="none" stroke="#0b0b0b" stroke-width="1.65"/><path d="M313.4 225.4 C312.9 227.7 311.7 232.8 310.5 239.2 C309.3 245.6 306.8 259.8 306.1 263.9" fill="none" stroke="#0b0b0b" stroke-width="1.65"/><path d="M278.5 242.1 C279.7 244.0 281.7 253.2 285.8 253.7 C289.9 254.2 300.3 246.4 303.2 245.0" fill="none" stroke="#0b0b0b" stroke-width="1.65"/><path d="M275.6 170.5 C275.4 168.7 276.9 167.8 278.5 166.9 C280.1 166.1 282.9 165.2 285.1 165.4 C287.3 165.6 290.2 166.7 291.6 168.3 C293.1 169.9 293.8 172.9 293.8 174.8 C293.8 176.7 292.9 178.7 291.6 179.9 C290.3 181.1 287.7 182.5 285.8 182.1 C283.9 181.7 281.7 179.6 280.0 177.7 C278.3 175.8 275.9 172.3 275.6 170.5 Z" fill="#0b0b0b" stroke="#0b0b0b" stroke-width="1.20"/><path d="M293.1 174.1 C294.0 173.1 296.3 172.6 297.4 173.1 C298.5 173.6 299.4 175.6 299.6 177.0 C299.9 178.4 299.8 180.4 298.9 181.4 C298.0 182.4 295.6 183.2 294.5 182.8 C293.4 182.4 292.5 180.6 292.3 179.2 C292.1 177.8 292.2 175.1 293.1 174.1 Z" fill="#c2123d" stroke="none" stroke-width="0.00"/><path d="M285.0 182.0 C285.9 182.7 289.0 186.4 290.2 186.4 C291.4 186.4 291.9 182.8 292.3 182.1" fill="none" stroke="#0b0b0b" stroke-width="1.50"/><path d="M298.9 173.4 C299.9 172.8 303.0 169.9 304.7 169.8 C306.4 169.7 308.0 171.4 309.0 172.7 C310.0 174.0 310.2 176.9 310.5 177.7" fill="none" stroke="#0b0b0b" stroke-width="1.65"/><path d="M301.8 171.2 C302.8 173.2 305.2 179.0 307.6 183.5 C310.0 188.0 313.9 194.0 316.3 198.1 C318.7 202.2 321.1 206.5 322.1 208.2" fill="none" stroke="#0b0b0b" stroke-width="1.80"/><path d="M309.0 174.8 C310.2 177.0 313.2 183.3 316.3 187.9 C319.4 192.5 324.8 200.7 327.9 202.4 C331.0 204.1 333.8 198.8 335.0 198.1" fill="none" stroke="#0b0b0b" stroke-width="1.95"/><path d="M293.1 183.5 C294.1 184.5 297.0 186.2 298.9 189.3 C300.8 192.5 302.8 199.0 304.7 202.4 C306.6 205.8 309.5 208.6 310.5 209.8" fill="none" stroke="#0b0b0b" stroke-width="1.65"/><path d="M315.0 186.6 C316.4 188.1 321.0 193.4 323.7 195.3 C326.4 197.2 329.8 197.7 331.0 198.2" fill="none" stroke="#0b0b0b" stroke-width="1.80"/><path d="M252.4 239.9 C256.2 236.7 270.9 239.3 275.0 243.0 C279.1 246.7 277.7 257.4 277.1 262.0 C276.5 266.6 273.5 267.8 271.3 270.7 C269.1 273.6 266.2 276.7 264.0 279.4 C261.8 282.1 258.4 283.5 258.2 286.7 C258.0 289.9 260.7 294.2 262.6 298.3 C264.5 302.4 267.9 307.2 269.8 311.3 C271.7 315.4 273.8 320.3 274.2 323.0 C274.6 325.7 273.3 326.8 272.0 327.3 C270.7 327.8 268.2 327.8 266.2 325.9 C264.1 324.0 262.2 319.6 259.7 315.7 C257.2 311.8 253.4 306.7 251.0 302.6 C248.6 298.5 246.4 294.4 245.2 291.0 C244.0 287.6 243.2 285.7 243.7 282.3 C244.2 278.9 246.6 274.1 248.1 270.7 C249.6 267.3 251.7 267.1 252.4 262.0 C253.1 256.9 248.6 243.1 252.4 239.9 Z" fill="#3f4567" stroke="none" stroke-width="0.00"/><path d="M251.5 240.0 C251.4 243.7 252.5 255.2 251.0 262.0 C249.5 268.8 244.0 276.1 242.3 280.9 C240.6 285.7 239.6 286.9 240.8 291.0 C242.0 295.1 246.3 300.6 249.5 305.5 C252.7 310.4 257.3 316.5 259.7 320.1 C262.1 323.7 263.3 325.9 264.0 327.0" fill="none" stroke="#0b0b0b" stroke-width="1.95"/><path d="M277.1 263.5 C274.0 267.4 260.4 280.4 258.2 286.7 C256.0 293.0 261.6 296.1 264.0 301.2 C266.4 306.3 270.8 313.0 272.7 317.2 C274.6 321.4 275.1 324.9 275.6 326.5" fill="none" stroke="#0b0b0b" stroke-width="1.95"/><ellipse cx="262" cy="334" rx="12" ry="3.8" fill="#fff" stroke="#0b0b0b" stroke-width="1.72" transform="rotate(-8 262 334)"/><ellipse cx="272" cy="337" rx="12.5" ry="4" fill="#fff" stroke="#0b0b0b" stroke-width="1.72" transform="rotate(-12 272 337)"/><path d="M258.2 175.6 L239.4 190.8 L242.3 201 L250.5 200 L250.2 238 L268 239 L280 225 L283 206 L296 198.1 L287.2 192.2 L277.1 183.5 L269.1 176.3 Z" fill="#fff" stroke="none" stroke-width="0.00"/><path d="M258.2 175.6 C256.8 176.7 252.6 179.6 249.5 182.1 C246.4 184.6 240.6 187.7 239.4 190.8 C238.2 194.0 240.6 199.6 242.3 201.0 C244.0 202.4 248.3 199.8 249.5 199.5" fill="none" stroke="#0b0b0b" stroke-width="1.95"/><path d="M265.5 179.2 C264.6 180.9 261.8 185.7 260.4 189.3 C258.9 192.9 257.9 197.8 256.8 201.0 C255.7 204.2 254.4 207.0 253.9 208.2" fill="none" stroke="#0b0b0b" stroke-width="1.65"/><path d="M269.1 176.3 C270.4 177.5 274.1 180.8 277.1 183.5 C280.1 186.2 284.1 189.8 287.2 192.2 C290.3 194.6 293.1 196.1 296.0 198.1 C298.9 200.1 302.3 201.9 304.7 203.9 C307.1 205.9 309.5 208.8 310.5 209.8" fill="none" stroke="#0b0b0b" stroke-width="1.95"/><path d="M251.0 200.0 C250.8 202.9 249.6 211.3 249.5 217.4 C249.4 223.5 247.3 232.9 250.2 236.3 C253.1 239.7 264.1 237.5 266.9 237.7" fill="none" stroke="#0b0b0b" stroke-width="1.95"/><path d="M277.0 196.6 L278.5 209.8" fill="none" stroke="#0b0b0b" stroke-width="1.50"/><path d="M282.9 205.8 C281.2 208.2 283.2 215.0 282.2 218.9 C281.2 222.8 279.8 225.2 277.1 229.0 C274.4 232.8 268.4 238.5 266.2 241.4 C264.0 244.3 263.3 245.0 264.0 246.4 C264.7 247.8 268.3 250.6 270.6 250.1 C272.9 249.6 274.8 246.8 277.8 243.5 C280.8 240.2 285.4 234.6 288.7 230.5 C292.0 226.4 296.8 223.2 297.4 218.9 C298.0 214.6 294.7 206.6 292.3 204.4 C289.9 202.2 284.6 203.4 282.9 205.8 Z" fill="#fff" stroke="#0b0b0b" stroke-width="1.80"/><path d="M211.8 166.5 C212.5 168.7 214.7 175.2 216.1 179.5 C217.5 183.8 219.1 188.8 220.5 192.6 C221.9 196.3 223.8 200.1 224.8 202.0 C225.8 203.9 223.9 203.9 226.3 204.2 C228.7 204.5 237.1 203.9 239.3 203.9" fill="none" stroke="#0b0b0b" stroke-width="1.95"/><path d="M218.3 169.4 C219.2 170.8 221.1 175.0 223.4 178.1 C225.7 181.2 229.7 185.7 232.1 188.2 C234.5 190.7 236.9 192.5 237.9 193.3" fill="none" stroke="#0b0b0b" stroke-width="1.95"/><path d="M212.0 167.5 C211.0 166.2 211.1 163.8 211.5 162.5 C211.9 161.2 213.3 159.8 214.5 159.5 C215.7 159.2 217.7 159.4 218.5 160.5 C219.3 161.6 219.8 164.4 219.6 166.0 C219.4 167.6 218.8 169.8 217.5 170.0 C216.2 170.2 213.0 168.8 212.0 167.5 Z" fill="#fff" stroke="#0b0b0b" stroke-width="1.65"/><path d="M254.6 150.9 C253.1 152.4 251.1 156.7 251.0 158.9 C250.9 161.1 252.7 161.7 253.9 163.9 C255.1 166.1 256.6 169.8 258.2 171.9 C259.8 174.0 261.5 175.8 263.3 176.3 C265.1 176.8 267.2 176.1 269.1 174.8 C271.0 173.5 273.3 170.2 274.9 168.3 C276.5 166.4 279.6 165.2 278.5 163.2 C277.4 161.1 271.1 158.2 268.0 156.0 C264.9 153.8 262.2 150.8 260.0 150.0 C257.8 149.2 256.1 149.4 254.6 150.9 Z" fill="#fff" stroke="#0b0b0b" stroke-width="1.65"/><path d="M254.6 150.9 C254.8 150.1 256.1 148.1 258.2 147.3 C260.2 146.5 264.1 145.9 266.9 146.1 C269.7 146.3 272.7 147.3 274.9 148.7 C277.1 150.1 279.3 152.3 280.0 154.5 C280.7 156.7 280.0 160.1 279.3 161.8 C278.6 163.5 277.2 164.3 275.6 164.7 C274.0 165.0 271.6 164.6 269.8 163.9 C268.0 163.2 266.1 161.8 264.8 160.3 C263.5 158.9 262.6 156.6 261.9 155.2 C261.2 153.8 261.2 152.1 260.4 151.6 C259.5 151.1 257.8 152.4 256.8 152.3 C255.8 152.2 254.4 151.7 254.6 150.9 Z" fill="#0b0b0b" stroke="#0b0b0b" stroke-width="1.20"/><path d="M399.5 239.3 C404.3 237.3 424.3 240.4 428.5 243.0 C432.7 245.6 425.8 249.9 424.9 255.0 C424.0 260.1 422.7 267.5 423.0 273.7 C423.3 279.9 425.8 287.6 426.7 292.3 C427.6 297.0 429.5 299.3 428.6 301.6 C427.7 303.9 423.6 306.8 421.1 306.3 C418.6 305.8 416.2 301.5 413.7 298.8 C411.2 296.1 408.2 294.6 406.2 290.4 C404.2 286.2 402.6 279.6 401.5 273.7 C400.4 267.8 400.0 260.7 399.7 255.0 C399.4 249.3 394.7 241.3 399.5 239.3 Z" fill="#0b0b0b" stroke="#0b0b0b" stroke-width="1.20"/><path d="M410.9 301.6 C410.0 302.9 405.6 307.1 405.3 309.1 C405.0 311.1 407.3 313.3 409.0 313.8 C410.7 314.3 414.4 312.2 415.5 311.9" fill="none" stroke="#0b0b0b" stroke-width="1.65"/><path d="M422.0 306.3 C422.2 307.2 421.8 310.6 423.0 311.9 C424.2 313.1 428.4 313.5 429.5 313.8" fill="none" stroke="#0b0b0b" stroke-width="1.65"/><path d="M401.0 221.9 L398.8 237.9" fill="none" stroke="#0b0b0b" stroke-width="1.65"/><path d="M434.3 223.4 L430.0 239.3" fill="none" stroke="#0b0b0b" stroke-width="1.65"/><path d="M406.8 198.7 L420 199 L434.3 200.2 L435.1 210.3 L433.6 222.7 L418.4 224.1 L403.9 219.8 L404.5 209 Z" fill="#3f4567" stroke="#0b0b0b" stroke-width="1.50"/><path d="M408.2 159.1 C408.0 157.7 410.7 155.7 412.6 154.8 C414.5 154.0 417.6 153.4 419.8 154.0 C422.0 154.6 424.2 156.2 425.6 158.4 C427.1 160.6 428.1 164.7 428.5 167.1 C428.9 169.5 428.5 171.6 427.8 172.9 C427.1 174.2 425.5 175.8 424.2 175.1 C422.9 174.4 421.5 170.4 419.8 168.5 C418.1 166.6 415.9 165.1 414.0 163.5 C412.1 161.9 408.4 160.5 408.2 159.1 Z" fill="#c2123d" stroke="none" stroke-width="0.00"/><path d="M404.6 162.7 C405.2 162.1 407.0 160.5 408.2 159.1 C409.4 157.7 410.1 155.1 412.0 154.0 C413.9 152.9 417.3 152.0 419.8 152.6 C422.3 153.2 425.3 155.3 427.0 157.7 C428.7 160.1 429.5 165.5 430.0 167.1" fill="none" stroke="#0b0b0b" stroke-width="1.65"/><path d="M404.6 162.7 C405.1 164.1 406.5 168.6 407.5 171.4 C408.5 174.2 408.8 177.9 410.4 179.4 C412.0 180.9 415.8 180.1 416.9 180.2" fill="none" stroke="#0b0b0b" stroke-width="1.65"/><path d="M387.9 184.5 C388.6 182.3 392.2 181.1 393.7 181.6 C395.1 182.1 396.4 185.5 396.6 187.4 C396.9 189.3 396.4 192.0 395.2 193.2 C394.0 194.4 390.6 196.2 389.4 194.8 C388.2 193.4 387.2 186.7 387.9 184.5 Z" fill="#c2123d" stroke="none" stroke-width="0.00"/><path d="M391.5 174.3 C391.5 173.3 391.0 170.1 391.5 168.5 C392.0 166.9 393.2 165.1 394.4 164.5 C395.6 163.9 397.9 163.8 398.8 164.9 C399.7 166.1 399.4 170.3 399.5 171.4" fill="none" stroke="#0b0b0b" stroke-width="1.65"/><path d="M387.2 183.0 C387.2 182.0 386.7 178.5 387.2 177.2 C387.7 175.9 388.8 174.7 390.1 175.1 C391.4 175.5 394.4 178.7 395.2 179.4" fill="none" stroke="#0b0b0b" stroke-width="1.65"/><path d="M398.8 174.3 C399.6 175.0 401.6 176.9 403.9 178.7 C406.2 180.5 409.7 184.8 412.6 185.2 C415.5 185.6 418.7 182.9 421.3 180.9 C423.9 178.9 426.1 175.5 428.5 172.9 C430.9 170.3 434.6 166.8 435.8 165.6" fill="none" stroke="#0b0b0b" stroke-width="1.95"/><path d="M389.4 183.0 C391.1 183.7 396.1 185.9 399.5 187.4 C402.9 188.9 406.6 190.6 409.7 191.8 C412.8 193.0 416.9 194.3 418.4 194.8" fill="none" stroke="#0b0b0b" stroke-width="1.80"/><path d="M414.0 188.9 C416.4 187.9 425.4 182.3 428.5 183.0 C431.6 183.7 432.2 191.5 432.9 193.2" fill="none" stroke="#0b0b0b" stroke-width="1.80"/><path d="M349.0 241.0 C356.5 238.5 380.3 238.5 386.0 240.0 C391.7 241.5 384.5 247.5 383.2 250.2 C381.9 252.9 381.7 252.1 378.4 256.0 C375.1 259.9 366.3 268.3 363.5 273.7 C360.7 279.1 360.7 283.6 361.6 288.6 C362.5 293.6 366.9 298.2 369.1 303.5 C371.3 308.8 376.9 317.3 374.7 320.3 C372.5 323.3 361.0 324.3 356.0 321.5 C351.0 318.7 348.6 309.9 344.9 303.5 C341.2 297.1 335.9 287.4 333.7 283.0 C331.5 278.6 330.6 282.1 331.8 277.4 C333.0 272.7 338.2 261.1 341.1 255.0 C344.0 248.9 341.5 243.5 349.0 241.0 Z" fill="#0b0b0b" stroke="#0b0b0b" stroke-width="1.20"/><path d="M362.6 275.5 C363.7 273.0 368.6 267.7 370.0 269.9 C371.4 272.1 371.5 284.9 371.0 288.6 C370.5 292.3 368.4 292.9 367.2 292.3 C365.9 291.7 364.3 287.7 363.5 284.9 C362.7 282.1 361.5 278.0 362.6 275.5 Z" fill="#4b5272" stroke="none" stroke-width="0.00"/><path d="M352.3 258.7 L341.1 279.3 L346.7 288.6 L350 277 L355.1 266.2 Z" fill="#fff" stroke="none" stroke-width="0.00"/><path d="M371.0 270.0 L371.0 311.0" fill="none" stroke="#0b0b0b" stroke-width="1.35"/><path d="M357.5 243.5 C358.8 241.5 362.1 241.7 365.8 241.4 C369.5 241.1 378.2 240.0 379.5 241.8 C380.8 243.7 375.8 250.0 373.5 252.5 C371.2 255.0 368.4 256.8 365.8 257.0 C363.2 257.2 359.4 255.8 358.0 253.5 C356.6 251.2 356.2 245.5 357.5 243.5 Z" fill="#fff" stroke="#0b0b0b" stroke-width="1.50"/><path d="M339.3 329.6 C340.2 328.1 343.9 326.2 346.7 325.0 C349.5 323.8 351.9 322.4 356.0 322.2 C360.1 322.0 367.7 323.1 371.0 324.0 C374.3 324.9 375.0 326.2 375.6 327.8 C376.2 329.4 376.7 331.8 374.7 333.4 C372.7 334.9 367.9 336.3 363.5 337.1 C359.1 337.9 352.3 338.5 348.6 338.0 C344.9 337.5 342.7 335.7 341.1 334.3 C339.6 332.9 338.4 331.2 339.3 329.6 Z" fill="#c2123d" stroke="#0b0b0b" stroke-width="1.50"/><path d="M356.0 323.0 L349.0 336.0" fill="none" stroke="#0b0b0b" stroke-width="1.35"/><path d="M331.0 156.1 C331.8 153.8 332.1 147.5 333.1 144.5 C334.1 141.5 335.5 139.3 336.8 138.0 C338.1 136.7 340.0 136.1 341.1 136.5 C342.2 136.9 343.4 138.1 343.3 140.2 C343.2 142.3 341.5 146.1 340.4 148.9 C339.3 151.7 336.2 153.5 336.8 156.9 C337.4 160.3 341.7 165.9 344.0 169.2 C346.3 172.4 348.4 174.8 350.6 176.4 C352.8 178.0 358.2 177.9 357.1 178.6 C356.0 179.3 348.5 180.6 344.0 180.8 C339.5 181.1 333.0 182.3 330.2 180.1 C327.4 177.9 327.6 171.3 327.3 167.7 C327.0 164.1 327.5 160.2 328.1 158.3 C328.7 156.4 330.2 158.4 331.0 156.1 Z" fill="#fff" stroke="#0b0b0b" stroke-width="1.80"/><path d="M329.0 157.7 L336.8 156.9" fill="none" stroke="#0b0b0b" stroke-width="1.50"/><path d="M332.4 198.2 C333.6 195.5 338.2 190.5 341.1 188.1 C344.0 185.7 347.1 184.8 349.8 183.7 C352.5 182.6 355.2 181.4 357.1 181.5 C359.0 181.6 359.5 184.8 361.4 184.4 C363.3 184.0 366.8 180.6 368.7 179.3 C370.6 178.0 371.2 176.2 373.1 176.4 C375.0 176.7 378.1 178.9 380.3 180.8 C382.5 182.8 384.4 185.2 386.1 188.1 C387.8 191.0 389.3 194.8 390.5 198.2 C391.7 201.6 394.6 206.2 393.4 208.8 C392.2 211.4 385.1 212.0 383.2 213.6 C381.3 215.2 382.3 215.7 381.8 218.2 C381.3 220.7 381.3 225.5 380.3 228.4 C379.3 231.3 378.7 233.7 376.0 235.6 C373.3 237.5 367.4 239.3 364.3 240.0 C361.2 240.7 359.5 241.4 357.1 240.0 C354.7 238.6 351.6 234.5 349.8 231.3 C348.0 228.2 346.7 225.4 346.2 221.1 C345.7 216.8 347.9 207.5 346.9 205.2 C345.9 202.8 342.2 207.2 340.0 207.0 C337.8 206.8 335.2 205.5 333.9 204.0 C332.6 202.5 331.2 200.8 332.4 198.2 Z" fill="#3a2e2d" stroke="#0b0b0b" stroke-width="1.50"/><path d="M393.4 208.8 C393.9 210.1 396.8 213.5 396.3 216.8 C395.8 220.1 393.4 224.3 390.5 228.4 C387.6 232.5 382.3 237.6 378.9 241.4 C375.5 245.2 371.5 249.4 370.0 251.0" fill="none" stroke="#0b0b0b" stroke-width="1.80"/><path d="M385.0 213.3 C384.6 216.4 384.3 227.1 382.5 232.0 C380.7 236.9 375.4 241.2 374.0 243.0" fill="none" stroke="#0b0b0b" stroke-width="1.50"/><path d="M349.8 231.3 L346.0 241.0" fill="none" stroke="#0b0b0b" stroke-width="1.50"/><path d="M348.4 162.7 C348.0 164.8 348.6 167.9 349.8 170.6 C351.0 173.2 353.9 177.6 355.6 178.6 C357.3 179.6 358.6 177.7 360.0 176.4 C361.4 175.1 363.2 172.5 364.3 170.6 C365.4 168.7 366.9 167.1 366.5 164.8 C366.1 162.5 364.4 158.1 362.0 157.0 C359.6 155.9 354.3 157.1 352.0 158.0 C349.7 158.9 348.8 160.6 348.4 162.7 Z" fill="#fff" stroke="#0b0b0b" stroke-width="1.65"/><path d="M344.8 154.7 C345.0 153.0 345.6 150.5 346.9 148.9 C348.2 147.3 350.5 145.8 352.7 145.2 C354.9 144.6 357.7 144.6 360.0 145.2 C362.3 145.8 364.8 147.2 366.5 148.9 C368.2 150.6 369.7 153.4 370.2 155.4 C370.7 157.4 370.1 159.6 369.4 161.2 C368.7 162.8 366.6 165.2 365.8 164.8 C365.0 164.4 365.5 159.6 364.3 159.0 C363.1 158.4 360.2 161.3 358.5 161.2 C356.8 161.1 355.5 158.3 354.2 158.3 C352.9 158.3 351.7 160.5 350.6 161.2 C349.5 161.9 348.6 163.1 347.7 162.7 C346.8 162.3 346.0 160.3 345.5 159.0 C345.0 157.7 344.6 156.4 344.8 154.7 Z" fill="#0b0b0b" stroke="#0b0b0b" stroke-width="1.20"/><path d="M366.5 164.8 L369.0 172.5" fill="none" stroke="#0b0b0b" stroke-width="1.35"/><path d="M438.7 215.4 L464.8 216.1 L464.1 223.4 L461.5 229 L463.4 235 L470.6 242.2 L470.5 255 L467 277.4 L470.6 307.2 L476.2 334.3 L452.8 329.6 L441.6 324 L434.2 297.9 L428.6 273.7 L427.6 255 L430 242.2 L434.3 226.3 Z" fill="#c2123d" stroke="none" stroke-width="0.00"/><path d="M438.7 215.4 C438.0 217.2 435.8 221.8 434.3 226.3 C432.9 230.8 431.2 236.6 430.0 242.2 C428.8 247.8 427.6 256.9 427.1 259.8" fill="none" stroke="#0b0b0b" stroke-width="1.65"/><path d="M423.9 273.7 C424.7 277.7 426.3 289.8 428.6 297.9 C430.9 306.0 436.3 318.1 437.9 322.2" fill="none" stroke="#0b0b0b" stroke-width="1.65"/><path d="M446.7 239.3 C446.3 245.3 444.0 265.1 444.4 275.5 C444.8 285.9 447.7 292.6 449.1 301.6 C450.5 310.6 452.2 324.9 452.8 329.6" fill="none" stroke="#0b0b0b" stroke-width="1.65"/><path d="M470.5 255.0 C469.9 258.7 467.0 268.7 467.0 277.4 C467.0 286.1 469.1 297.7 470.6 307.2 C472.1 316.7 475.3 329.8 476.2 334.3" fill="none" stroke="#0b0b0b" stroke-width="1.65"/><path d="M438.7 215.0 L464.8 215.7" fill="none" stroke="#0b0b0b" stroke-width="1.80"/><path d="M424.9 331.5 C426.1 329.5 431.6 323.4 436.0 323.1 C440.4 322.8 450.1 327.6 451.0 329.6 C451.9 331.6 445.3 334.3 441.6 335.2 C437.9 336.1 431.4 335.8 428.6 335.2 C425.8 334.6 423.7 333.5 424.9 331.5 Z" fill="#fff" stroke="#0b0b0b" stroke-width="1.65"/><path d="M447.2 339.0 C447.2 337.1 450.0 332.1 454.7 331.5 C459.4 330.9 472.7 333.6 475.2 335.2 C477.7 336.8 473.0 339.6 469.6 340.8 C466.2 342.1 458.4 343.0 454.7 342.7 C451.0 342.4 447.2 340.9 447.2 339.0 Z" fill="#fff" stroke="#0b0b0b" stroke-width="1.65"/><path d="M448.9 162.0 C447.4 162.2 442.9 162.7 440.2 163.5 C437.5 164.3 435.1 165.5 432.9 167.1 C430.7 168.7 428.8 171.0 427.1 172.9 C425.4 174.8 425.1 176.5 422.7 178.7 C420.3 180.9 414.3 184.8 412.6 186.0" fill="none" stroke="#0b0b0b" stroke-width="1.95"/><path d="M428.5 174.3 C429.5 176.7 432.9 185.5 434.3 188.9 C435.8 192.3 436.7 190.6 437.2 194.8 C437.7 199.0 437.4 210.8 437.5 214.0" fill="none" stroke="#0b0b0b" stroke-width="1.80"/><path d="M464.1 159.8 C465.9 160.5 471.1 162.6 475.0 164.2 C478.9 165.8 484.2 165.8 487.3 169.5 C490.4 173.2 495.2 182.1 493.6 186.1 C492.0 190.1 480.1 192.3 477.4 193.6" fill="none" stroke="#0b0b0b" stroke-width="1.95"/><path d="M473.6 184.8 C473.4 187.7 473.6 197.1 472.4 202.3 C471.2 207.5 467.3 213.7 466.3 216.0" fill="none" stroke="#0b0b0b" stroke-width="1.80"/><path d="M493.6 186.1 C493.8 188.8 497.1 196.5 494.8 202.3 C492.5 208.1 484.8 215.1 480.0 221.0 C475.2 226.9 468.6 235.1 466.3 237.9" fill="none" stroke="#0b0b0b" stroke-width="1.95"/><path d="M479.0 193.6 C479.6 195.5 483.8 200.6 482.3 204.8 C480.8 209.0 474.1 215.1 470.0 219.0 C465.9 222.9 459.7 226.9 457.6 228.5" fill="none" stroke="#0b0b0b" stroke-width="1.80"/><path d="M441.5 174.6 L452 173.8 L463 174.8 L463.4 192 L463.4 208.1 L452 207 L440.9 208.1 L440.9 192 Z" fill="#c2123d" stroke="none" stroke-width="0.00"/><path d="M457.6 228.5 C456.2 229.5 462.7 235.4 466.3 237.9 C469.9 240.4 476.2 243.7 479.3 243.7 C482.4 243.7 485.7 239.8 485.0 237.9 C484.3 236.0 479.6 233.7 475.0 232.1 C470.4 230.5 459.1 227.5 457.6 228.5 Z" fill="#fff" stroke="#0b0b0b" stroke-width="1.65"/><path d="M435.8 151.1 C435.5 153.0 438.5 153.8 440.2 155.5 C441.9 157.2 444.1 160.1 446.0 161.3 C447.9 162.5 450.1 163.2 451.8 162.7 C453.5 162.2 455.0 160.1 456.1 158.4 C457.2 156.7 459.0 155.3 458.3 152.6 C457.6 149.9 454.7 143.4 452.0 142.0 C449.3 140.6 444.7 142.5 442.0 144.0 C439.3 145.5 436.1 149.2 435.8 151.1 Z" fill="#fff" stroke="#0b0b0b" stroke-width="1.65"/><path d="M450.3 163.5 C451.0 163.7 452.5 165.4 454.7 164.9 C456.9 164.4 462.4 162.4 463.4 160.6 C464.4 158.8 461.0 155.1 460.5 154.0" fill="none" stroke="#0b0b0b" stroke-width="1.65"/><path d="M431.4 139.5 C431.8 137.2 433.2 134.7 435.1 133.0 C437.1 131.3 440.3 130.0 443.1 129.4 C445.9 128.8 449.2 128.7 451.8 129.4 C454.4 130.1 457.3 131.8 459.0 133.7 C460.7 135.6 461.6 138.3 461.9 141.0 C462.1 143.7 461.2 147.8 460.5 149.7 C459.8 151.6 458.3 153.6 457.6 152.6 C456.9 151.6 457.3 145.8 456.1 143.9 C454.9 142.0 452.2 140.8 450.3 141.0 C448.4 141.2 446.2 144.0 444.5 145.3 C442.8 146.6 441.6 147.9 440.2 148.9 C438.8 149.9 437.0 151.4 435.8 151.1 C434.6 150.8 433.6 148.7 432.9 146.8 C432.2 144.9 431.0 141.8 431.4 139.5 Z" fill="#0b0b0b" stroke="#0b0b0b" stroke-width="1.20"/><path d="M526.0 242.5 C531.3 240.5 546.5 241.5 552.1 243.4 C557.7 245.3 557.4 249.8 559.6 253.7 C561.8 257.6 565.1 263.8 565.1 266.7 C565.1 269.6 562.4 270.8 559.6 271.4 C556.8 272.0 551.2 271.8 548.4 270.4 C545.6 269.0 544.7 265.5 542.8 263.0 C540.9 260.5 539.7 254.9 537.2 255.5 C534.7 256.1 530.6 263.9 527.8 266.7 C525.0 269.5 522.4 272.0 520.4 272.3 C518.4 272.6 515.7 271.4 515.7 268.6 C515.7 265.8 518.7 259.9 520.4 255.5 C522.1 251.2 520.7 244.5 526.0 242.5 Z" fill="#0b0b0b" stroke="#0b0b0b" stroke-width="1.20"/><path d="M489.6 289.1 C492.2 286.0 503.7 278.2 507.3 277.0 C510.9 275.8 512.9 278.7 511.0 281.6 C509.1 284.6 499.4 292.4 496.1 294.7 C492.9 297.0 492.6 296.5 491.5 295.6 C490.4 294.7 487.0 292.2 489.6 289.1 Z" fill="#0b0b0b" stroke="#0b0b0b" stroke-width="1.20"/><path d="M563.3 281.6 C564.1 277.7 570.0 277.3 571.7 280.7 C573.4 284.1 574.3 298.3 573.5 302.2 C572.7 306.1 568.7 307.4 567.0 304.0 C565.3 300.6 562.5 285.5 563.3 281.6 Z" fill="#0b0b0b" stroke="#0b0b0b" stroke-width="1.20"/><path d="M526.0 241.5 C524.1 245.7 518.8 260.9 514.8 266.7 C510.7 272.4 506.4 272.3 501.7 276.0 C497.0 279.7 491.1 284.7 486.8 289.1 C482.5 293.5 477.5 300.0 475.6 302.2" fill="none" stroke="#0b0b0b" stroke-width="1.80"/><path d="M531.6 266.7 C528.8 269.5 521.0 278.2 514.8 283.5 C508.6 288.8 499.0 294.7 494.3 298.4 C489.6 302.1 488.1 304.6 486.8 305.9" fill="none" stroke="#0b0b0b" stroke-width="1.80"/><path d="M554.0 243.4 C555.9 246.4 561.7 255.9 565.1 261.1 C568.5 266.3 572.3 269.2 574.3 274.6 C576.3 280.0 576.7 288.2 577.2 293.2 C577.7 298.2 577.2 302.9 577.2 304.8" fill="none" stroke="#0b0b0b" stroke-width="1.80"/><path d="M559.2 272.3 C559.6 274.8 560.5 281.6 561.5 287.4 C562.5 293.2 562.4 304.3 565.0 307.2 C567.6 310.1 575.2 305.2 577.2 304.8" fill="none" stroke="#0b0b0b" stroke-width="1.65"/><path d="M510.0 272.3 L514.8 279.8" fill="none" stroke="#0b0b0b" stroke-width="1.35"/><ellipse cx="482" cy="303.5" rx="9" ry="4.6" fill="#fff" stroke="#0b0b0b" stroke-width="1.72" transform="rotate(-40 482 303.5)"/><path d="M577.2 306.0 C578.0 307.0 580.7 309.9 581.8 311.8 C582.9 313.7 584.2 316.4 583.6 317.6 C583.0 318.8 580.3 319.0 578.3 318.8 C576.3 318.6 572.5 316.9 571.4 316.5" fill="none" stroke="#0b0b0b" stroke-width="1.65"/><path d="M530 200 L541 201 L536 218 L530 234 L518 248 L508 244 L518 234 L524 224 L513 229 L506 221 L520 210 Z" fill="#c2123d" stroke="none" stroke-width="0.00"/><path d="M503.0 219.0 C505.8 217.0 514.8 210.5 520.0 207.0 C525.2 203.5 529.7 199.5 534.0 198.0 C538.3 196.5 544.0 198.0 546.0 198.0" fill="none" stroke="#0b0b0b" stroke-width="1.80"/><path d="M503.0 219.0 C503.6 220.1 504.8 223.7 506.5 225.5 C508.2 227.3 509.9 230.2 513.0 230.0 C516.1 229.8 523.0 225.0 525.0 224.0" fill="none" stroke="#0b0b0b" stroke-width="1.65"/><path d="M530.0 234.0 C528.3 236.5 523.8 247.3 520.0 249.0 C516.2 250.7 507.3 246.5 507.0 244.0 C506.7 241.5 516.2 235.7 518.0 234.0" fill="none" stroke="#0b0b0b" stroke-width="1.65"/><path d="M561.0 212.0 C561.8 209.7 565.0 211.7 566.0 214.0 C567.0 216.3 567.3 221.7 567.0 226.0 C566.7 230.3 565.3 237.5 564.0 240.0 C562.7 242.5 559.5 243.0 559.0 241.0 C558.5 239.0 560.7 232.8 561.0 228.0 C561.3 223.2 560.2 214.3 561.0 212.0 Z" fill="#c2123d" stroke="none" stroke-width="0.00"/><path d="M566.0 213.0 C566.3 215.2 568.2 221.5 568.0 226.0 C567.8 230.5 566.5 237.3 565.0 240.0 C563.5 242.7 560.0 241.7 559.0 242.0" fill="none" stroke="#0b0b0b" stroke-width="1.50"/><path d="M546.0 198.0 C547.0 199.0 549.7 202.2 552.0 204.0 C554.3 205.8 558.7 208.2 560.0 209.0" fill="none" stroke="#0b0b0b" stroke-width="1.65"/><path d="M528.0 242.0 L556.0 244.0" fill="none" stroke="#0b0b0b" stroke-width="1.95"/><path d="M549.0 192.0 C546.7 194.3 549.8 197.5 551.0 200.0 C552.2 202.5 553.8 206.0 556.0 207.0 C558.2 208.0 561.7 207.5 564.0 206.0 C566.3 204.5 567.8 201.0 570.0 198.0 C572.2 195.0 577.8 190.0 577.0 188.0 C576.2 186.0 569.7 185.3 565.0 186.0 C560.3 186.7 551.3 189.7 549.0 192.0 Z" fill="#fff" stroke="#0b0b0b" stroke-width="1.65"/><path d="M547.0 186.0 C546.5 184.0 548.2 181.7 550.0 180.0 C551.8 178.3 554.7 176.7 558.0 176.0 C561.3 175.3 566.5 175.2 570.0 176.0 C573.5 176.8 577.7 179.2 579.0 181.0 C580.3 182.8 579.5 185.2 578.0 187.0 C576.5 188.8 572.3 191.5 570.0 192.0 C567.7 192.5 566.0 189.8 564.0 190.0 C562.0 190.2 559.8 192.7 558.0 193.0 C556.2 193.3 554.8 193.2 553.0 192.0 C551.2 190.8 547.5 188.0 547.0 186.0 Z" fill="#0b0b0b" stroke="#0b0b0b" stroke-width="1.20"/><path d="M560.0 200.0 L562.0 203.5" fill="none" stroke="#0b0b0b" stroke-width="1.65"/></g></g>
<g filter="url(#soft0)"><rect x="570.300" y="35.400" width="97" height="94.200" rx="15.500" fill="#00005b"/><text x="582" y="102.400" font-family="Liberation Sans, sans-serif" font-weight="bold" font-size="61" fill="#9999ff" stroke="#9999ff" stroke-width=".5" textLength="77.500" lengthAdjust="spacingAndGlyphs">An</text>
<defs><filter id="soft0" x="0" y="0" width="690" height="482" filterUnits="userSpaceOnUse" color-interpolation-filters="sRGB"><feGaussianBlur stdDeviation="0.45"/></filter><filter id="soft" x="0" y="0" width="690" height="482" filterUnits="userSpaceOnUse" color-interpolation-filters="sRGB"><feGaussianBlur stdDeviation="0.55"/></filter><filter id="sh" x="-20%" y="-20%" width="140%" height="140%" color-interpolation-filters="sRGB"><feGaussianBlur stdDeviation="2.500"/></filter></defs><polygon points="609.0,319.1 619.6,337.1 636.4,324.5 639.3,345.3 659.6,340.0 654.3,360.3 675.1,363.2 662.5,380.0 680.5,390.6 662.5,401.2 675.1,418.0 654.3,420.9 659.6,441.2 639.3,435.9 636.4,456.7 619.6,444.1 609.0,462.1 598.4,444.1 581.6,456.7 578.7,435.9 558.4,441.2 563.7,420.9 542.9,418.0 555.5,401.2 537.5,390.6 555.5,380.0 542.9,363.2 563.7,360.3 558.4,340.0 578.7,345.3 581.6,324.5 598.4,337.1" fill="#000" opacity=".45" filter="url(#sh)" transform="translate(-1.500,2.500)"/><polygon points="609.0,319.1 619.6,337.1 636.4,324.5 639.3,345.3 659.6,340.0 654.3,360.3 675.1,363.2 662.5,380.0 680.5,390.6 662.5,401.2 675.1,418.0 654.3,420.9 659.6,441.2 639.3,435.9 636.4,456.7 619.6,444.1 609.0,462.1 598.4,444.1 581.6,456.7 578.7,435.9 558.4,441.2 563.7,420.9 542.9,418.0 555.5,401.2 537.5,390.6 555.5,380.0 542.9,363.2 563.7,360.3 558.4,340.0 578.7,345.3 581.6,324.5 598.4,337.1" fill="#e3d81f"/><g font-family="Liberation Sans, sans-serif" font-weight="bold" font-style="italic" font-size="30" fill="#b8417f" stroke="#b8417f" stroke-width=".9"><text x="580" y="386.300" textLength="56" lengthAdjust="spacingAndGlyphs">NEW</text><text x="573" y="416.200" textLength="68" lengthAdjust="spacingAndGlyphs">CAMP</text></g></g>
</svg></body></html>
